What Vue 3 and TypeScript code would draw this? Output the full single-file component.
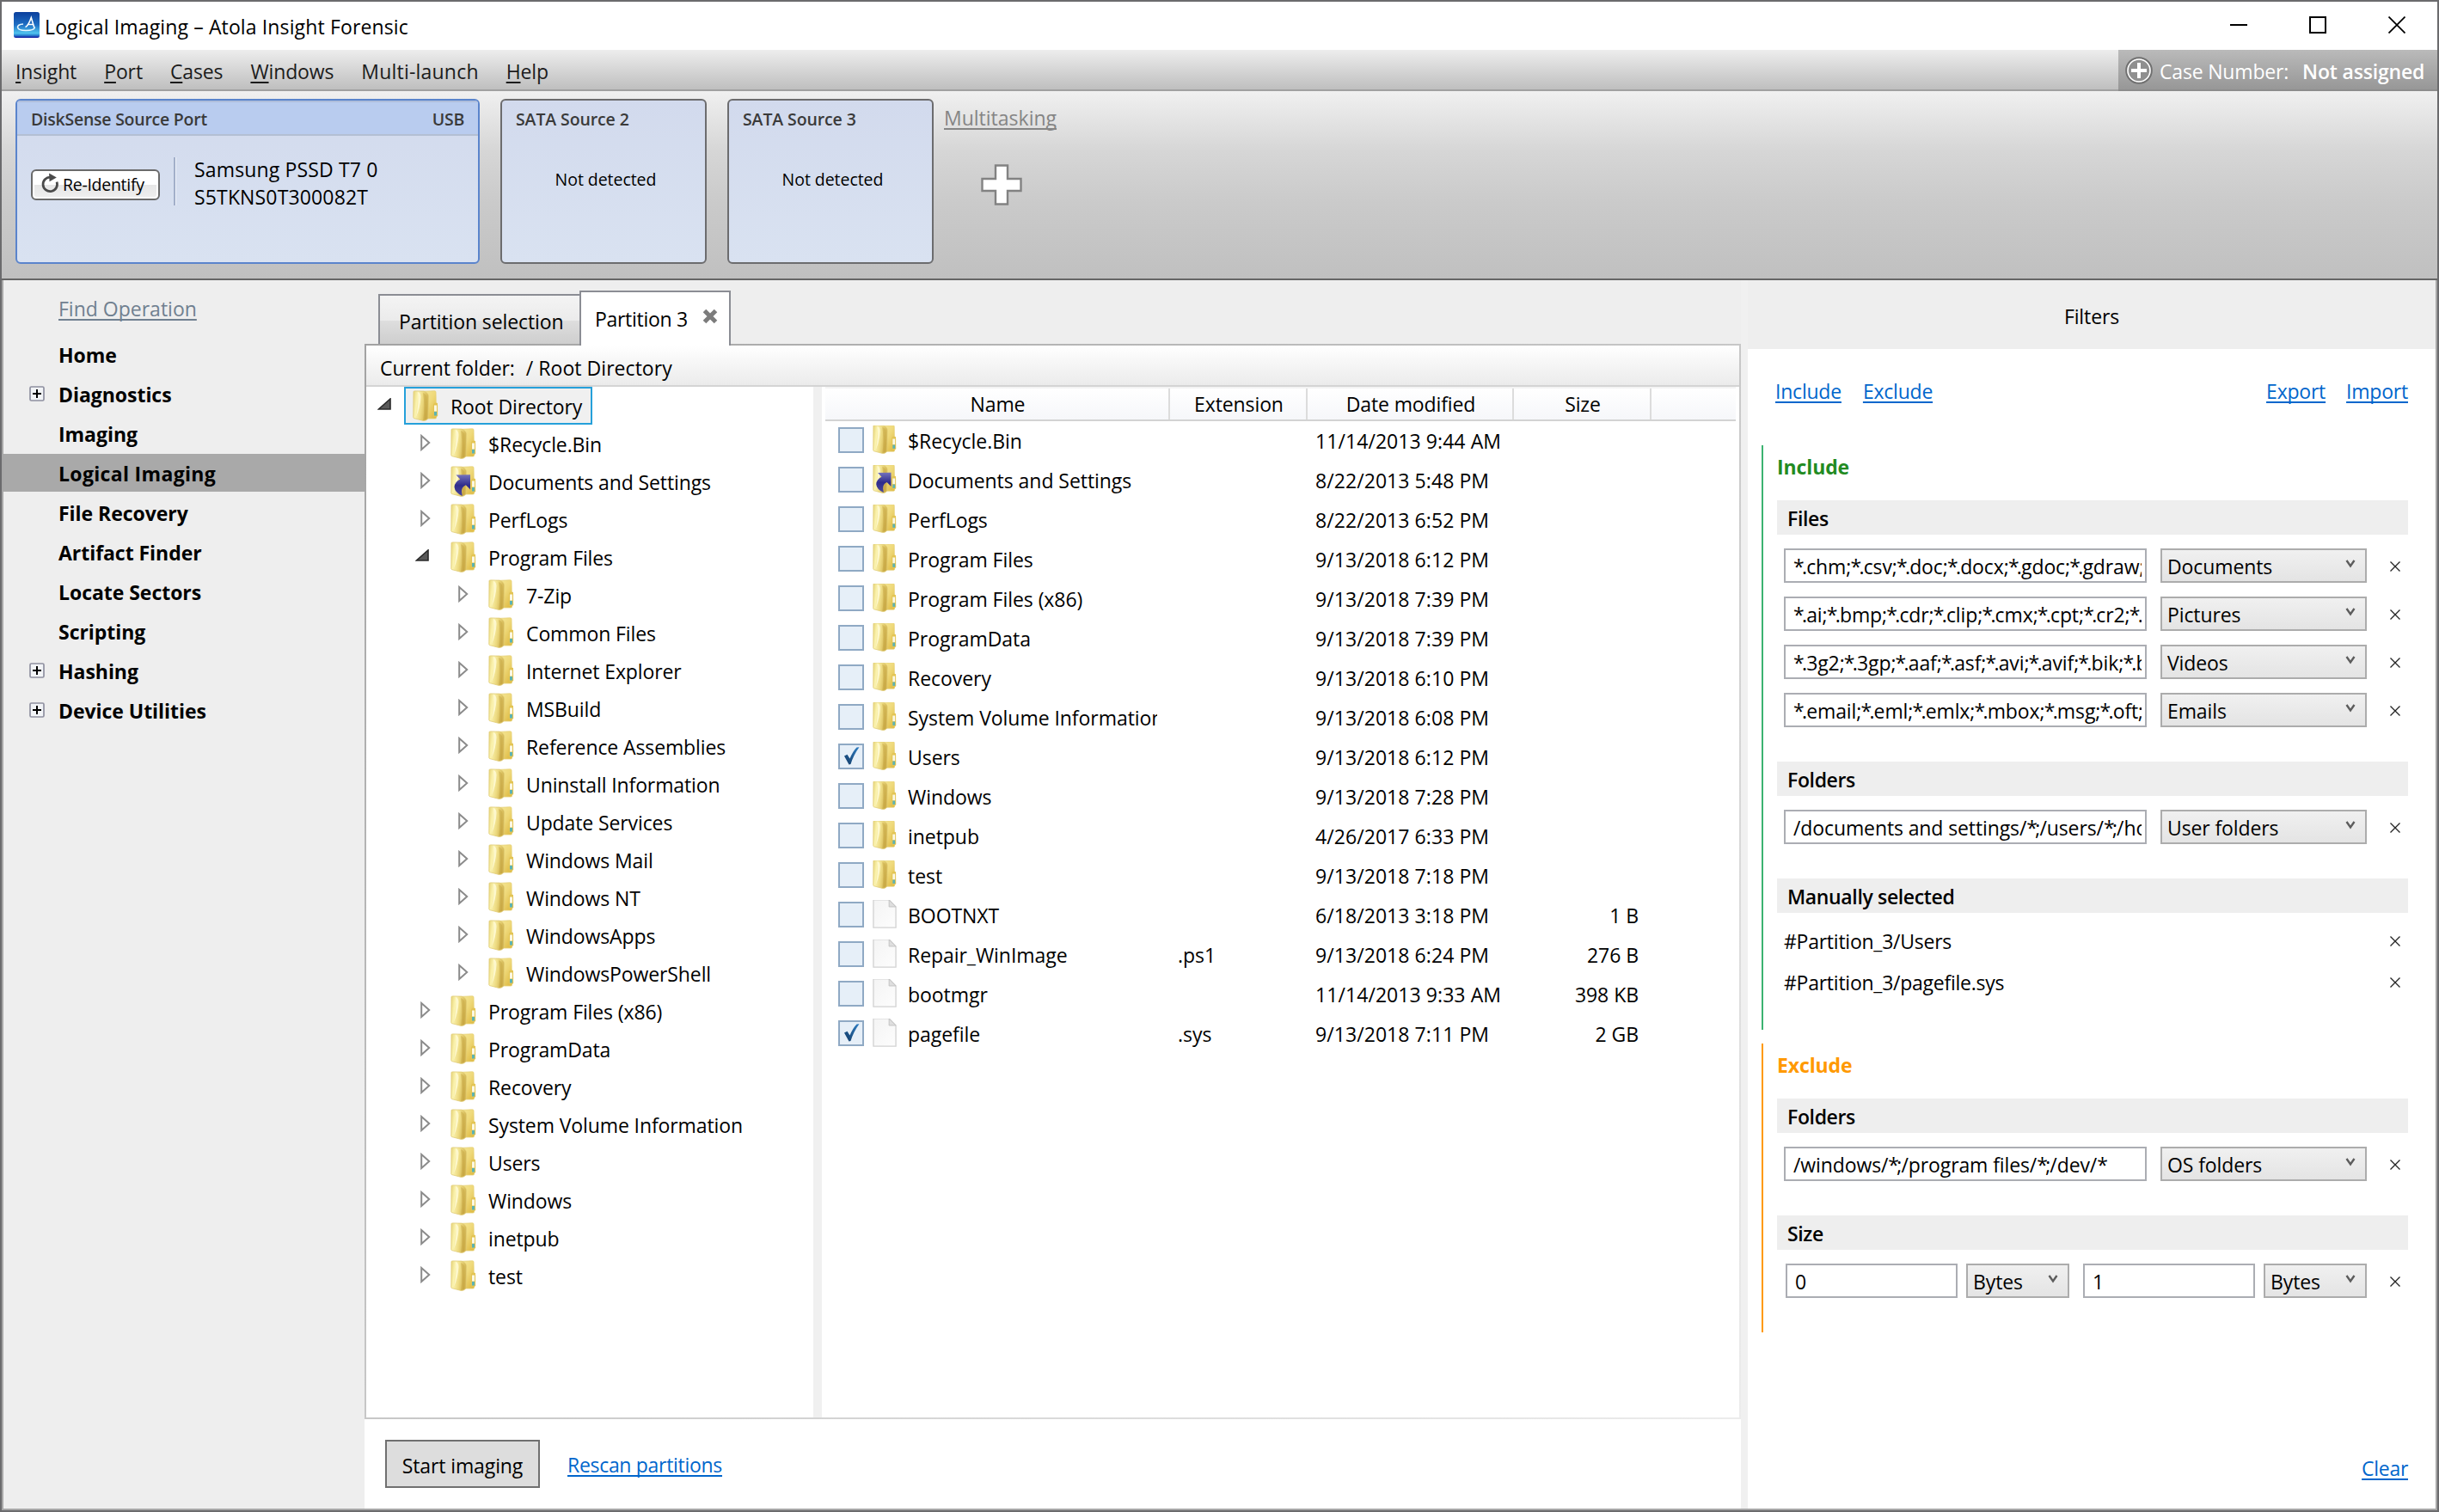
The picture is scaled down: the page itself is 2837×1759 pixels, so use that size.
<script setup lang="ts">
interface TreeNode { label: string; level: number; open?: boolean; link?: boolean; selected?: boolean }
interface FileRow { name: string; kind: 'folder' | 'link' | 'file'; ext?: string; date: string; size?: string; checked?: boolean }

const menu = [['I', 'nsight'], ['P', 'ort'], ['C', 'ases'], ['W', 'indows'], ['', 'Multi-launch'], ['H', 'elp']]

const operations = [
  { label: 'Home' },
  { label: 'Diagnostics', expandable: true },
  { label: 'Imaging' },
  { label: 'Logical Imaging', active: true },
  { label: 'File Recovery' },
  { label: 'Artifact Finder' },
  { label: 'Locate Sectors' },
  { label: 'Scripting' },
  { label: 'Hashing', expandable: true },
  { label: 'Device Utilities', expandable: true },
] as { label: string; expandable?: boolean; active?: boolean }[]

const tree: TreeNode[] = [
  { label: 'Root Directory', level: 0, open: true, selected: true },
  { label: '$Recycle.Bin', level: 1 },
  { label: 'Documents and Settings', level: 1, link: true },
  { label: 'PerfLogs', level: 1 },
  { label: 'Program Files', level: 1, open: true },
  ...['7-Zip', 'Common Files', 'Internet Explorer', 'MSBuild', 'Reference Assemblies', 'Uninstall Information',
    'Update Services', 'Windows Mail', 'Windows NT', 'WindowsApps', 'WindowsPowerShell'].map((label) => ({ label, level: 2 })),
  ...['Program Files (x86)', 'ProgramData', 'Recovery', 'System Volume Information', 'Users', 'Windows', 'inetpub', 'test']
    .map((label) => ({ label, level: 1 })),
]

const files: FileRow[] = [
  { name: '$Recycle.Bin', kind: 'folder', date: '11/14/2013 9:44 AM' },
  { name: 'Documents and Settings', kind: 'link', date: '8/22/2013 5:48 PM' },
  { name: 'PerfLogs', kind: 'folder', date: '8/22/2013 6:52 PM' },
  { name: 'Program Files', kind: 'folder', date: '9/13/2018 6:12 PM' },
  { name: 'Program Files (x86)', kind: 'folder', date: '9/13/2018 7:39 PM' },
  { name: 'ProgramData', kind: 'folder', date: '9/13/2018 7:39 PM' },
  { name: 'Recovery', kind: 'folder', date: '9/13/2018 6:10 PM' },
  { name: 'System Volume Information', kind: 'folder', date: '9/13/2018 6:08 PM' },
  { name: 'Users', kind: 'folder', date: '9/13/2018 6:12 PM', checked: true },
  { name: 'Windows', kind: 'folder', date: '9/13/2018 7:28 PM' },
  { name: 'inetpub', kind: 'folder', date: '4/26/2017 6:33 PM' },
  { name: 'test', kind: 'folder', date: '9/13/2018 7:18 PM' },
  { name: 'BOOTNXT', kind: 'file', date: '6/18/2013 3:18 PM', size: '1 B' },
  { name: 'Repair_WinImage', kind: 'file', ext: '.ps1', date: '9/13/2018 6:24 PM', size: '276 B' },
  { name: 'bootmgr', kind: 'file', date: '11/14/2013 9:33 AM', size: '398 KB' },
  { name: 'pagefile', kind: 'file', ext: '.sys', date: '9/13/2018 7:11 PM', size: '2 GB', checked: true },
]

const fileFilters = [
  { mask: '*.chm;*.csv;*.doc;*.docx;*.gdoc;*.gdraw;', type: 'Documents' },
  { mask: '*.ai;*.bmp;*.cdr;*.clip;*.cmx;*.cpt;*.cr2;*.c', type: 'Pictures' },
  { mask: '*.3g2;*.3gp;*.aaf;*.asf;*.avi;*.avif;*.bik;*.b', type: 'Videos' },
  { mask: '*.email;*.eml;*.emlx;*.mbox;*.msg;*.oft;', type: 'Emails' },
]
const folderFilters = [{ mask: '/documents and settings/*;/users/*;/ho', type: 'User folders' }]
const excludeFolders = [{ mask: '/windows/*;/program files/*;/dev/*', type: 'OS folders' }]
const manual = ['#Partition_3/Users', '#Partition_3/pagefile.sys']
const sizeRange = ['0', '1']

/* Punctuation is set tighter than the rest of a mask. */
const pieces = (mask: string) => mask.split(/([*;.])/).filter(Boolean)
const pieceClass = (p: string) => (p === '*' ? 'star' : p === ';' || p === '.' ? 'semi' : '')
</script>

<template>
  <div class="window">
    <svg class="defs" width="0" height="0">
      <defs>
        <linearGradient id="gBack" x1="0" y1="0" x2="1" y2="1">
          <stop offset="0" stop-color="#f6ea9c" /><stop offset=".5" stop-color="#efd97a" /><stop offset="1" stop-color="#dcb63c" />
        </linearGradient>
        <linearGradient id="gFront" x1="0" y1="0" x2="1" y2=".25">
          <stop offset="0" stop-color="#e6d478" /><stop offset=".3" stop-color="#fbf3b0" /><stop offset=".65" stop-color="#ecd97f" /><stop offset="1" stop-color="#cfb04c" />
        </linearGradient>
        <linearGradient id="gArrow" x1="0" y1="0" x2="0" y2="1">
          <stop offset="0" stop-color="#7573bd" /><stop offset=".5" stop-color="#2f2c8c" /><stop offset="1" stop-color="#4a489c" />
        </linearGradient>
        <linearGradient id="gPage" x1="0" y1="0" x2="1" y2="1">
          <stop offset="0" stop-color="#f4f4f4" /><stop offset="1" stop-color="#fdfdfd" />
        </linearGradient>
        <linearGradient id="gLogo" x1="0" y1="0" x2="0" y2="1">
          <stop offset="0" stop-color="#0b3f9c" /><stop offset=".5" stop-color="#1f6fc4" /><stop offset=".82" stop-color="#4fc3ee" /><stop offset=".9" stop-color="#2a86d2" /><stop offset="1" stop-color="#10109c" />
        </linearGradient>
        <linearGradient id="gTick" x1="0" y1="1" x2="1" y2="0">
          <stop offset="0" stop-color="#123a66" /><stop offset="1" stop-color="#2f7fc4" />
        </linearGradient>
      </defs>
      <symbol id="folder" viewBox="0 0 30 36">
        <path d="M9 1.500 L25.500 .8 Q27 .8 27 2.200 L27.500 32 Q27.500 33 26 33 L12 33 Z" fill="url(#gBack)" stroke="#e6d078" stroke-width=".8" />
        <path d="M1 1.800 Q1 .8 2.500 .9 L13 1.200 Q18.500 3 18.300 7 L18 32.500 Q16.500 35.500 12.500 35.500 L1.600 32.600 Q.8 32.300 .8 31.500 Z" fill="url(#gFront)" stroke="#dfca72" stroke-width=".8" />
        <path d="M6 2 Q9.500 3 9.500 8 Q9 20 4 31 Q7.500 15 6 2 Z" fill="#fffbd8" opacity=".8" />
        <path d="M12 3 Q16.500 4.500 16.400 9 L16 33.500 Q13 35.300 12.300 34.800 Q14.500 18 12 3 Z" fill="#bf9c38" opacity=".4" />
        <path d="M24 16 Q26 13.500 29 15 L29.200 30 Q27 32 24 31 Z" fill="#e3c454" />
        <rect x="25" y="17.500" width="3" height="7" fill="#fbf8e4" />
        <rect x="25" y="25" width="3" height="4.500" fill="#5bb3b4" />
      </symbol>
      <symbol id="link" viewBox="0 0 30 36">
        <use href="#folder" width="30" height="36" />
        <path d="M6.500 10.500 L23 10.300 L23 27.500 L17.800 22.200 Q12.500 24.500 13 30.500 L13.800 35 Q5 31 4.500 24.500 Q5 18.500 11.200 15.500 Z" fill="url(#gArrow)" />
      </symbol>
      <symbol id="file" viewBox="0 0 30 36">
        <path d="M1 1 H20.500 L29 9.500 V35 H1 Z" fill="url(#gPage)" stroke="#d2d2d2" stroke-width="1.400" />
        <path d="M20.500 1 V9.500 H29 Z" fill="#dedede" stroke="#c2c2c2" stroke-width="1" />
      </symbol>
    </svg>

    <header class="title-bar">
      <svg class="logo" viewBox="0 0 30 30">
        <rect width="30" height="30" rx="2.500" fill="url(#gLogo)" />
        <path d="M11 14 Q4.500 14.500 4.500 17.500 Q5 21.500 14 21.500 Q24 21.500 24.500 17.500" fill="none" stroke="#e8f8ff" stroke-width="1.600" />
        <path d="M13.500 17.500 Q17 16 20.300 6.500 L23.800 18 M17.500 14.500 H22.500" fill="none" stroke="#fff" stroke-width="1.600" />
      </svg>
      <span class="title">Logical Imaging – Atola Insight Forensic</span>
      <div class="controls">
        <svg viewBox="0 0 20 20"><path d="M0 10 H20" stroke="#000" stroke-width="2" /></svg>
        <svg viewBox="0 0 20 20"><rect x="1" y="1" width="18" height="18" fill="none" stroke="#000" stroke-width="2" /></svg>
        <svg viewBox="0 0 20 20"><path d="M.5 .5 L19.500 19.500 M19.500 .5 L.5 19.500" stroke="#000" stroke-width="1.800" /></svg>
      </div>
    </header>

    <nav class="menu-bar">
      <div class="menu">
        <span v-for="m in menu" :key="m[1]" :class="{ loose: !m[0] }"><u>{{ m[0] }}</u>{{ m[1] }}</span>
      </div>
      <div class="case">
        <svg viewBox="0 0 32 32">
          <circle cx="16" cy="16" r="14.800" fill="#8f8f8f" stroke="#707070" stroke-width="2" />
          <circle cx="16" cy="16" r="13" fill="none" stroke="#fff" stroke-width="1.600" />
          <path d="M16 7 V25 M7 16 H25" stroke="#fff" stroke-width="4" />
        </svg>
        <span class="case-label">Case Number:</span>
        <b>Not assigned</b>
      </div>
    </nav>

    <section class="ports">
      <div class="port active">
        <div class="port-head"><span>DiskSense Source Port</span><span>USB</span></div>
        <div class="port-body">
          <button class="identify">
            <svg viewBox="0 0 24 26"><path d="M13 5 A9 9 0 1 0 20.800 11" fill="none" stroke="#4a4a4a" stroke-width="3" /><path d="M11 0 L20.500 5.300 L11.500 10.500 Z" fill="#4a4a4a" /></svg>
            <span>Re-Identify</span>
          </button>
          <i class="divider" />
          <div class="device"><div>Samsung PSSD T7 0</div><div>S5TKNS0T300082T</div></div>
        </div>
      </div>
      <div v-for="n in [2, 3]" :key="n" class="port">
        <div class="port-head"><span>SATA Source {{ n }}</span></div>
        <div class="none">Not detected</div>
      </div>
      <div class="multi">
        <a>Multitasking</a>
        <svg viewBox="0 0 48 48"><path d="M17 1.500 H31 V17 H46.500 V31 H31 V46.500 H17 V31 H1.500 V17 H17 Z" fill="#fff" stroke="#828282" stroke-width="2.400" /></svg>
      </div>
    </section>

    <main class="body">
      <aside class="sidebar">
        <a class="find">Find Operation</a>
        <div v-for="o in operations" :key="o.label" class="op" :class="{ on: o.active }">
          <span class="slot">
            <svg v-if="o.expandable" viewBox="0 0 18 18">
              <rect x="1" y="1" width="16" height="16" rx="1.500" fill="#f2f4f7" stroke="#8f90a0" stroke-width="1.700" />
              <path d="M4 9 H14 M9 4 V14" stroke="#000" stroke-width="2" />
            </svg>
          </span>
          <b>{{ o.label }}</b>
        </div>
      </aside>

      <section class="center">
        <div class="tabs">
          <div class="tab">Partition selection</div>
          <div class="tab current"><span>Partition 3</span>
            <svg viewBox="0 0 18 18"><path d="M2.500 2.500 L15.500 15.500 M15.500 2.500 L2.500 15.500" stroke="#7c7c7c" stroke-width="5" /></svg>
          </div>
        </div>
        <div class="frame">
          <div class="path"><span>Current folder:</span><span class="root">/ Root Directory</span></div>
          <div class="split">
            <div class="tree">
              <div v-for="t in tree" :key="t.label" class="node" :class="'l' + t.level">
                <span class="arrow" :class="{ open: t.open }">
                  <svg v-if="t.open" viewBox="0 0 16 14"><path d="M15 1 V13 H1.500 Z" fill="#595959" stroke="#2a2a2a" stroke-width="1.600" /></svg>
                  <svg v-else viewBox="0 0 12 20"><path d="M1.200 2 V18 L10.200 10 Z" fill="#fff" stroke="#8b8b8b" stroke-width="2" /></svg>
                </span>
                <span class="item" :class="{ sel: t.selected }">
                  <svg viewBox="0 0 30 36"><use :href="t.link ? '#link' : '#folder'" /></svg>
                  <span>{{ t.label }}</span>
                </span>
              </div>
            </div>
            <div class="gutter" />
            <div class="list">
              <div class="cols head">
                <span>Name</span><span>Extension</span><span>Date modified</span><span>Size</span><span />
              </div>
              <div v-for="f in files" :key="f.name" class="cols row">
                <span class="name">
                  <i class="check"><svg v-if="f.checked" viewBox="0 0 26 26"><path d="M5 12.500 L8.500 10.800 L11.500 15.500 Q15 7 19.500 2.500 L22.500 2.300 Q16 11 12.500 22 L10.500 22.500 Z" fill="url(#gTick)" /></svg></i>
                  <svg class="kind" viewBox="0 0 30 36" preserveAspectRatio="none"><use :href="'#' + f.kind" /></svg>
                  <em>{{ f.name }}</em>
                </span>
                <span class="ext">{{ f.ext }}</span>
                <span class="date">{{ f.date }}</span>
                <span class="size">{{ f.size }}</span>
              </div>
            </div>
          </div>
        </div>
        <footer class="actions">
          <button>Start imaging</button>
          <a>Rescan partitions</a>
        </footer>
      </section>

      <aside class="filters">
        <h2>Filters</h2>
        <div class="links"><a>Include</a><a class="ex">Exclude</a><a class="exp">Export</a><a>Import</a></div>

        <div class="group include">
          <h3>Include</h3>
          <h4>Files</h4>
          <div v-for="f in fileFilters" :key="f.type" class="rule">
            <div class="input wide"><div class="mask"><span v-for="(p, i) in pieces(f.mask)" :key="i" :class="pieceClass(p)">{{ p }}</span></div></div>
            <div class="select"><span>{{ f.type }}</span><svg viewBox="0 0 12 10"><path d="M1.500 1 L6 7.500 L10.500 1" /></svg></div>
            <svg class="x" viewBox="0 0 12 12"><path d="M.5 .5 L11.500 11.500 M11.500 .5 L.5 11.500" /></svg>
          </div>
          <h4 class="next">Folders</h4>
          <div v-for="f in folderFilters" :key="f.type" class="rule">
            <div class="input wide"><div class="mask"><span v-for="(p, i) in pieces(f.mask)" :key="i" :class="pieceClass(p)">{{ p }}</span></div></div>
            <div class="select"><span>{{ f.type }}</span><svg viewBox="0 0 12 10"><path d="M1.500 1 L6 7.500 L10.500 1" /></svg></div>
            <svg class="x" viewBox="0 0 12 12"><path d="M.5 .5 L11.500 11.500 M11.500 .5 L.5 11.500" /></svg>
          </div>
          <h4 class="next">Manually selected</h4>
          <div v-for="m in manual" :key="m" class="manual">
            <span>{{ m }}</span>
            <svg class="x" viewBox="0 0 12 12"><path d="M.5 .5 L11.500 11.500 M11.500 .5 L.5 11.500" /></svg>
          </div>
        </div>

        <div class="group exclude">
          <h3>Exclude</h3>
          <h4>Folders</h4>
          <div v-for="f in excludeFolders" :key="f.type" class="rule">
            <div class="input wide"><div class="mask"><span v-for="(p, i) in pieces(f.mask)" :key="i" :class="pieceClass(p)">{{ p }}</span></div></div>
            <div class="select"><span>{{ f.type }}</span><svg viewBox="0 0 12 10"><path d="M1.500 1 L6 7.500 L10.500 1" /></svg></div>
            <svg class="x" viewBox="0 0 12 12"><path d="M.5 .5 L11.500 11.500 M11.500 .5 L.5 11.500" /></svg>
          </div>
          <h4 class="next">Size</h4>
          <div class="rule sizes">
            <template v-for="s in sizeRange" :key="s">
              <div class="input">{{ s }}</div>
              <div class="select"><span>Bytes</span><svg viewBox="0 0 12 10"><path d="M1.500 1 L6 7.500 L10.500 1" /></svg></div>
            </template>
            <svg class="x" viewBox="0 0 12 12"><path d="M.5 .5 L11.500 11.500 M11.500 .5 L.5 11.500" /></svg>
          </div>
        </div>
        <a class="clear">Clear</a>
      </aside>
    </main>
  </div>
</template>

<style>
body { margin: 0; overflow: hidden; }
</style>

<style scoped>
* { box-sizing: border-box; }
.window {
  width: 2837px; height: 1759px; border: 2px solid #6b6b6d; background: #fff; color: #000;
  display: flex; flex-direction: column;
  font-family: "Open Sans", "Noto Sans", sans-serif; font-size: 23px; line-height: 32px; white-space: nowrap;
  letter-spacing: -.11px;
}
.defs { position: absolute; }
svg { display: block; flex: none; }
button { font: inherit; color: inherit; padding: 0; letter-spacing: inherit; }
a { text-decoration: underline; text-decoration-thickness: 2px; text-underline-offset: 3px; text-decoration-skip-ink: none; color: #0066cc; }

.title-bar { height: 56px; display: flex; align-items: center; padding: 2px 37px 0 14px; }
.logo { width: 30px; height: 30px; margin-top: -4px; }
.title { margin-left: 6px; letter-spacing: .13px; }
.controls { margin-left: auto; display: flex; gap: 72px; margin-top: -4px; }
.controls svg { width: 20px; height: 20px; }

.menu-bar { height: 48px; display: flex; background: linear-gradient(#ededed, #bfbfbf); border-bottom: 2px solid #a0a0a0; color: #1c1c1c; }
.menu { display: flex; gap: 32px; padding: 9px 0 0 16px; letter-spacing: -.13px; }
.menu u { text-decoration-thickness: 2px; text-underline-offset: 3px; }
.menu .loose { letter-spacing: .2px; }
.case { margin: 0 0 -2px auto; width: 371px; height: 48px; background: linear-gradient(#bababa, #979797); border-bottom: 2px solid #8d8d8d; display: flex; padding: 9px 0 0 8px; color: #fff; letter-spacing: -.18px; }
.case svg { width: 32px; height: 32px; margin-top: -1px; }
.case-label { margin-left: 8px; }
.case b { font-weight: 600; margin-left: 16px; }

.ports { height: 220px; flex: none; display: flex; gap: 24px; padding: 9px 16px 0; border-bottom: 2px solid #666; background: linear-gradient(#f0f0f0, #d6d6d6 32%, #cacaca 60%, #c0c0c0); }
.port { width: 240px; height: 192px; border: 2px solid #6c6c6e; border-radius: 6px; background: linear-gradient(#d2daed, #d9e2f1); overflow: hidden; }
.port.active { width: 540px; border-color: #5a84cc; }
.port-head { height: 41px; padding: 8px 16px 0; line-height: 28px; display: flex; justify-content: space-between; font-size: 19.500px; font-weight: 600; color: #3a3a3a; }
.active .port-head { background: #b9ccef; border-top: 2px solid #aebddb; border-bottom: 2px solid #b3bfd3; padding-top: 6px; letter-spacing: -.24px; }
.port-body { display: flex; align-items: flex-start; padding: 25px 0 0 16px; }
.identify { width: 150px; height: 36px; margin-top: 14px; border: 2px solid #6a6a6a; border-radius: 6px; background: linear-gradient(#fff 50%, #e6e6e6 50%, #efefef); display: flex; padding-left: 9px; font-size: 19.500px; line-height: 31px; letter-spacing: -.28px; box-shadow: inset 0 0 0 2px #fff; }
.identify svg { width: 22px; height: 25px; margin: 2px 4px 0 0; }
.divider { width: 3px; height: 56px; margin-left: 16px; border-left: 2px solid #a2afc9; border-right: 1px solid #eef2fa; }
.device { margin: -2px 0 0 21px; letter-spacing: .15px; }
.none { text-align: center; font-size: 19.500px; padding-top: 35px; padding-left: 5px; letter-spacing: -.05px; }
.multi { margin-left: -12px; display: flex; flex-direction: column; align-items: center; padding-top: 6px; letter-spacing: 0; }
.multi a { color: #858585; }
.multi svg { width: 48px; height: 48px; margin: 38px 0 0 2px; }

.body { flex: 1; min-height: 0; display: flex; border: solid #a7a7a7; border-width: 0 2px 2px; }
.sidebar { width: 420px; background: #eee; flex: none; }
.find { display: block; margin: 17px 0 0 64px; color: #708090; letter-spacing: 0; }
.op { height: 44px; margin-bottom: 2px; display: flex; align-items: center; }
.find + .op { margin-top: 15px; }
.op.on { background: #a9a9a9; }
.op b { padding-top: 2px; letter-spacing: -.04px; }
.op.on b { letter-spacing: .33px; }
.slot { width: 64px; padding-left: 30px; }
.slot svg { width: 18px; height: 18px; }

.center { width: 1601px; flex: none; display: flex; flex-direction: column; background: #fff; }
.tabs { height: 76px; flex: none; background: #eee; padding-left: 16px; display: flex; align-items: flex-end; margin-bottom: -2px; }
.tab { width: 234px; height: 60px; border: 2px solid #8b8d94; border-right: 0; border-bottom: 0; background: linear-gradient(#f4f4f4, #ebebeb 50%, #dedede 50%, #cdcdcd); padding: 14px 0 0 22px; }
.tab.current { position: relative; width: 176px; height: 64px; border-right: 2px solid #8b8d94; background: #fff; padding: 15px 0 0 16px; display: flex; justify-content: space-between; letter-spacing: -.3px; }
.tab svg { width: 18px; height: 18px; margin: 4px 13px 0 0; }
.frame { height: 1251px; flex: none; padding: 2px; background: linear-gradient(to bottom right, #a2a2a2, #ececec); display: flex; flex-direction: column; }
.path { height: 48px; background: linear-gradient(#fff, #ebebeb); border-bottom: 2px solid #d4d4d4; padding: 10px 0 0 16px; display: flex; }
.root { margin-left: 13px; letter-spacing: .05px; }
.split { flex: 1; display: flex; background: #fff; }
.tree { width: 520px; }
.node { height: 44px; display: flex; }
.l1 { padding-left: 44px; }
.l2 { padding-left: 88px; }
.arrow { width: 44px; padding: 11px 0 0 19px; }
.arrow svg { width: 12px; height: 20px; }
.arrow.open { padding: 13px 0 0 13px; }
.arrow.open svg { width: 16px; height: 14px; }
.item { display: flex; height: 44px; border: 2px solid transparent; padding: 0 10px 0 8px; }
.item.sel { border-color: #26a0da; background: #f0f0f0; }
.item svg { width: 30px; height: 36px; margin-top: 2px; }
.item > span { margin: 5px 0 0 14px; }
.gutter { width: 10px; background: #f0f0f0; }
.list { flex: 1; padding-left: 4px; }
.cols { display: grid; grid-template-columns: 401px 160px 240px 160px 98px; width: 1059px; }
.head { height: 40px; border-top: 2px solid #f3f3f3; border-bottom: 2px solid #d3d3d3; background: linear-gradient(#fff, #f6f7fa); text-align: center; line-height: 36px; margin-bottom: -1px; }
.head span:not(:last-child) { border-right: 2px solid #dcdcdc; padding-left: 2px; }
.row { height: 46px; align-items: center; letter-spacing: -.05px; }
.name { display: flex; align-items: center; width: 386px; overflow: hidden; padding-left: 15px; }
.check { flex: none; width: 30px; height: 30px; border: 2px solid #8fa9c4; background: #e6eff8; }
.check svg { width: 26px; height: 26px; }
.kind { width: 28px; height: 34px; margin: -2px 0 0 10px; }
.name em { font-style: normal; margin-left: 13px; padding-top: 2px; }
.ext { padding: 2px 0 0 9px; }
.date { padding: 2px 0 0 9px; letter-spacing: .07px; }
.size { padding: 2px 15px 0 0; text-align: right; }
.actions { flex: 1; display: flex; align-items: flex-start; padding: 24px 0 0 24px; }
.actions button { width: 180px; height: 56px; border: 2px solid #707070; background: #ddd; padding-top: 3px; }
.actions a { margin: 13px 0 0 32px; letter-spacing: -.3px; }

.filters { flex: 1; border-left: 8px solid #f0f0f0; display: flex; flex-direction: column; }
h2, h3, h4 { margin: 0; font-size: inherit; font-weight: 600; }
h2 { height: 80px; background: #eee; text-align: center; font-weight: 400; padding: 26px 0 0; }
.links { display: flex; padding: 33px 32px 0; height: 112px; letter-spacing: -.22px; }
.ex { margin-left: 25px; }
.exp { margin-left: auto; margin-right: 24px; }
.group { margin: 0 32px 0 16px; border-left: 2px solid #3cb371; padding-left: 16px; }
.include { height: 680px; }
.exclude { height: 336px; margin-top: 16px; border-color: #f90; }
h3 { height: 64px; padding-top: 9px; font-weight: 700; color: #228b22; padding-left: 0; }
.exclude h3 { color: #f90; }
h4 { height: 40px; background: #eee; padding: 5px 0 0 12px; letter-spacing: -.35px; }
.rule { display: flex; align-items: center; padding-left: 8px; margin-top: 16px; height: 40px; }
.next { margin-top: 40px; }
.input { width: 200px; height: 40px; border: 2px solid #abadb3; background: #fff; padding: 3px 0 0 9px; }
.input.wide { width: 422px; padding-right: 4px; }
.mask { overflow: hidden; }
.star { letter-spacing: -2.700px; }
.semi { letter-spacing: -.85px; }
.select { width: 240px; height: 40px; margin-left: 16px; border: 2px solid #acacac; background: linear-gradient(#f0f0f0, #e4e4e4); display: flex; justify-content: space-between; padding: 3px 11px 0 6px; }
.select svg { width: 12px; height: 10px; margin-top: 8px; fill: none; stroke: #5c5c5c; stroke-width: 2.400; }
.x { width: 12px; height: 12px; margin: 2px 9px 0 auto; stroke: #222; stroke-width: 1.300; }
.sizes { padding-left: 10px; }
.sizes .select { width: 120px; margin: 0 16px 0 10px; }
.sizes .x { margin-left: auto; }
.manual { height: 48px; display: flex; align-items: center; padding-left: 8px; letter-spacing: -.25px; }
.manual span { padding-top: 2px; }
.next + .manual { margin-top: 8px; }
.manual .x { margin-top: 1px; }
.clear { margin: 142px 32px 0 auto; letter-spacing: -.3px; }
</style>
